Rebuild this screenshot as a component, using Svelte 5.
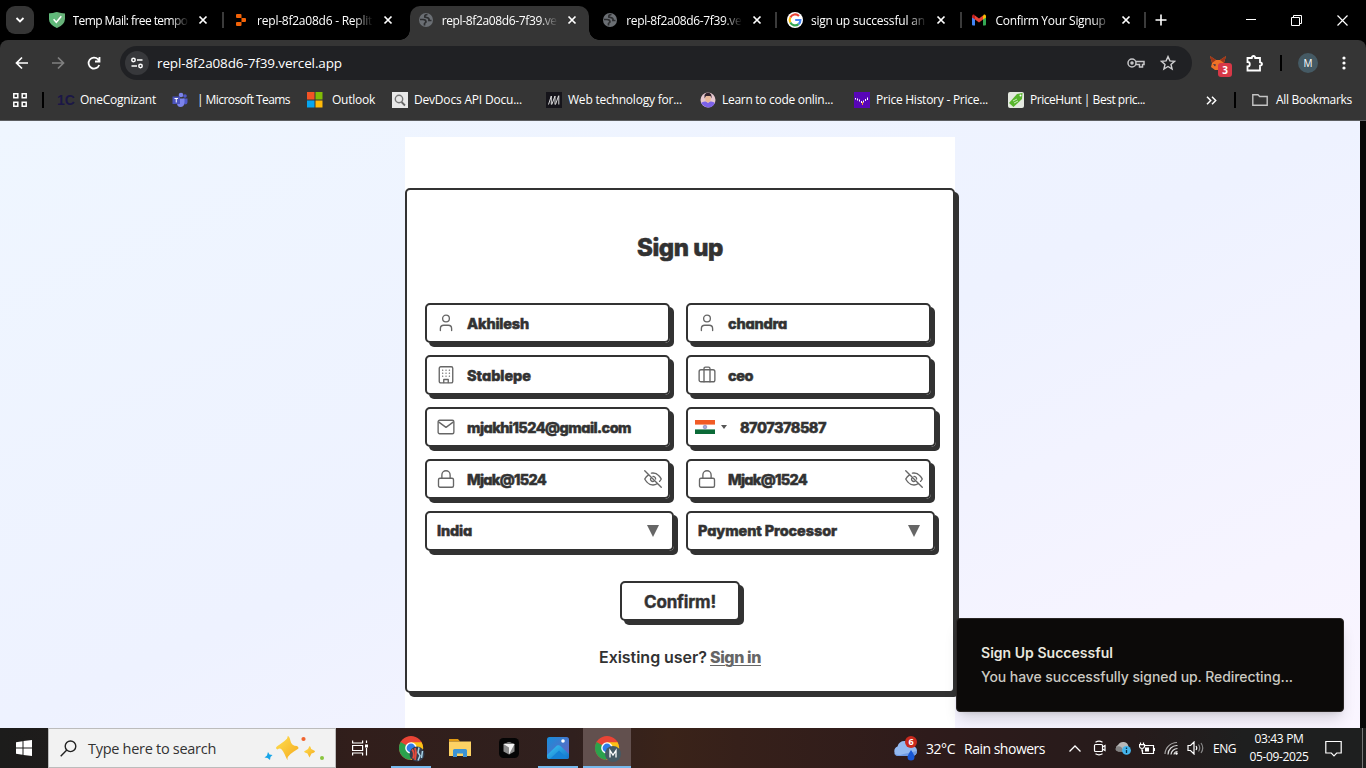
<script>
  // Tracks a label out (or in) so it occupies a given width in pixels.
  function fit(node, width) {
    node.style.letterSpacing = '0px';
    const range = document.createRange();
    range.selectNodeContents(node);
    const natural = range.getBoundingClientRect().width;
    node.style.letterSpacing = (width - natural) / node.textContent.length + 'px';
  }

  const tabs = [
    { icon: 'shield', title: 'Temp Mail: free tempo', w: 115 },
    { icon: 'replit', title: 'repl-8f2a08d6 - Replit', w: 115 },
    { icon: 'globe', title: 'repl-8f2a08d6-7f39.ve', w: 115, active: true },
    { icon: 'globe', title: 'repl-8f2a08d6-7f39.ve', w: 115, sep: true },
    { icon: 'google', title: 'sign up successful an', w: 114, sep: true },
    { icon: 'gmail', title: 'Confirm Your Signup', w: 110, sep: true }
  ];
  tabs[0].sep = true;

  const bookmarks = [
    { icon: 'onec', title: 'OneCognizant', w: 76, x: 57, slot: 23 },
    { icon: 'teams', title: '| Microsoft Teams', w: 93, x: 172, slot: 25 },
    { icon: 'outlook', title: 'Outlook', w: 43, x: 307, slot: 25 },
    { icon: 'search', title: 'DevDocs API Docu...', w: 108, x: 392, slot: 22 },
    { icon: 'mdn', title: 'Web technology for...', w: 114, x: 546, slot: 22 },
    { icon: 'face', title: 'Learn to code onlin...', w: 111, x: 700, slot: 22 },
    { icon: 'history', title: 'Price History - Price...', w: 112, x: 854, slot: 22 },
    { icon: 'tag', title: 'PriceHunt | Best pric...', w: 115, x: 1008, slot: 22 }
  ].map((b, i, all) => ({
    ...b,
    before: i ? b.x - (all[i - 1].x + all[i - 1].slot + all[i - 1].w) : 13
  }));

  const fields = [
    { icon: 'user', value: 'Akhilesh', w: 62 },
    { icon: 'user', value: 'chandra', w: 59 },
    { icon: 'building', value: 'Stablepe', w: 64 },
    { icon: 'case', value: 'ceo', w: 25 },
    { icon: 'mail', value: 'mjakhi1524@gmail.com', w: 164 },
    { kind: 'phone', value: '8707378587', w: 86 },
    { icon: 'lock', value: 'Mjak@1524', w: 79, eye: true },
    { icon: 'lock', value: 'Mjak@1524', w: 79, eye: true },
    { kind: 'select', value: 'India', w: 35 },
    { kind: 'select', value: 'Payment Processor', w: 139 }
  ];
</script>

{#snippet chromeLogo()}
  <circle cx="14" cy="14" r="12" fill="#e94435" />
  <path d="M3.600 8A12 12 0 0 0 13 26L18.500 17 14 14Z" fill="#2ba24c" />
  <path d="M13.600 26A12 12 0 0 0 24.600 8.200H14L19 17Z" fill="#fbc116" />
  <circle cx="14" cy="14" r="5.800" fill="#fff" />
  <circle cx="14" cy="14" r="4.400" fill="#2f7de9" />
{/snippet}

{#snippet fav(name)}
  <svg class="fav" width="16" height="16" viewBox="0 0 16 16" fill="none">
    {#if name === 'shield'}
      <path d="M8 0Q12 1.200 16 1.600V7Q15.600 13 8 16Q.4 13 0 7V1.600Q4 1.200 8 0Z" fill="#67b279" />
      <path d="M8 0Q4 1.200 0 1.600V7Q.4 13 8 16Z" fill="#5bc07b" opacity=".6" />
      <path d="m4.600 7.300 2.700 3 5-6" stroke="#fff" stroke-width="1.500" />
    {:else if name === 'replit'}
      <path d="M4 2h3.500q1 0 1 1v3H4q-1 0-1-1V3q0-1 1-1ZM8.500 6H12q1 0 1 1v2q0 1-1 1H8.500ZM4 10h4.500v3q0 1-1 1H4q-1 0-1-1v-2q0-1 1-1Z" fill="#f26207" />
    {:else if name === 'globe'}
      <circle cx="8" cy="8" r="7" fill="#6b6f74" />
      <path d="M9.500 2.500Q6.500 2.500 6.800 5L9.500 5.800Q11.500 6.500 11 8.500H13.500M2 7.500H5Q8 7.500 8 10L6.500 11.500V13.500" stroke="#2d2e30" stroke-width="1.700" />
    {:else if name === 'google'}
      <circle cx="8" cy="8" r="8" fill="#fff" />
      <path d="M12 4A5.400 5.400 0 0 0 3.300 5.500" stroke="#ea4335" stroke-width="2.200" />
      <path d="M3.300 5.500A5.400 5.400 0 0 0 3.300 10.500" stroke="#fbbc05" stroke-width="2.200" />
      <path d="M3.300 10.500A5.400 5.400 0 0 0 11.600 12.100" stroke="#34a853" stroke-width="2.200" />
      <path d="M11.600 12.100A5.400 5.400 0 0 0 13.400 8H8.200" stroke="#4285f4" stroke-width="2.200" />
    {:else if name === 'gmail'}
      <path d="M1 4v8.500q0 1 1 1h2V6Z" fill="#4285f4" />
      <path d="M12 6v7.500h2q1 0 1-1V4Z" fill="#34a853" />
      <path d="M4 3.500 8 6.500 12 3.500V7.500L8 10.500 4 7.500Z" fill="#ea4335" />
      <path d="M1 4.500Q1 2 3 2.500L4 3.500v4L1 5.500Z" fill="#c5221f" />
      <path d="M15 4.500Q15 2 13 2.500L12 3.500v4L15 5.500Z" fill="#fbbc04" />
    {:else if name === 'teams'}
      <circle cx="13" cy="4" r="1.800" fill="#5059c9" /><circle cx="9" cy="3" r="2.300" fill="#7b83eb" />
      <path d="M11 6.500h4.500V10q0 2.500-3 2.500Z" fill="#5059c9" />
      <path d="M5 6.500h7.500V11q-.5 4-4 4T5 11Z" fill="#7b83eb" />
      <path d="M.5 4.500H8V12H.5Z" fill="#4b53bc" /><path d="M2.500 6.500H6M4.250 6.500V10.500" stroke="#fff" />
    {:else if name === 'outlook'}
      <path d="M0 0h7.500v7.500H0Z" fill="#f35325" /><path d="M8.500 0H15.500v7.500H8.500Z" fill="#81bc06" />
      <path d="M0 8.500h7.500v7H0Z" fill="#05a6f0" /><path d="M8.500 8.500h7v7h-7Z" fill="#ffba08" />
    {:else if name === 'search'}
      <path d="M0 0h16v16H0Z" fill="#e8e8e8" /><circle cx="7" cy="7" r="3.700" stroke="#777" stroke-width="1.400" />
      <path d="m9.500 10 3.500 3.500" stroke="#666" stroke-width="1.800" />
    {:else if name === 'mdn'}
      <path d="M0 0h16v16H0Z" fill="#15141a" /><path d="M2.500 12.500 5.300 4M5.300 4V12.500M5.800 12.500 9 4M9 4V12.500M9.500 12.500 12.500 4M12.800 3.500v9" stroke="#eee" stroke-width=".9" />
    {:else if name === 'face'}
      <circle cx="8" cy="8" r="7.500" fill="#e7c8cf" /><path d="M1 11Q3 9 6 9.500L8 11 10 9.500Q13 9 15 11Q12 16 8 15.500T1 11Z" fill="#7c62e8" />
      <ellipse cx="8" cy="6.500" rx="2.800" ry="3.800" fill="#e8b99a" /><path d="M4.500 6.500V3Q6 0 9 .8T11.500 6.500L10.500 4H6Z" fill="#33232d" />
    {:else if name === 'history'}
      <path d="M0 0h16v16H0Z" fill="#5806b8" /><path d="M1.500 6v1.500M3.500 6.500V8.500M5.500 7.500V9.500M7.500 9v2M9.500 8.500v2M11.500 7V9M13.500 5.500V8" stroke="#fff" /><path d="M8.500 10v3" stroke="#f99b27" />
    {:else if name === 'tag'}
      <rect width="16" height="16" rx="2" fill="#e4e9df" /><path d="M9 2 14.500 1 14 7 5.500 15 1 11Z" fill="#57b52c" /><circle cx="12.500" cy="3.500" r="1" fill="#fff" /><path d="m5 9 4-2M6 11l4-2" stroke="#c7edba" />
    {/if}
  </svg>
{/snippet}

{#snippet fieldIcon(name)}
  <svg width="18" height="18" viewBox="0 0 24 24" fill="none" stroke="#666" stroke-width="1.800" stroke-linecap="round" stroke-linejoin="round">
    {#if name === 'user'}
      <path d="M19.500 22v-2.500a4.500 4.500 0 0 0-4.500-4.500H9a4.500 4.500 0 0 0-4.500 4.500V22" /><circle cx="12" cy="6" r="4.500" />
    {:else if name === 'building'}
      <rect x="3" y="1" width="18" height="21.500" rx="2" /><path d="M9 22v-4h6v4M7.500 5.500h.1M12 5.500h.1M16.500 5.500h.1M7.500 9.500h.1M12 9.500h.1M16.500 9.500h.1M7.500 13.500h.1M12 13.500h.1M16.500 13.500h.1" />
    {:else if name === 'case'}
      <rect x="1.500" y="5" width="21" height="16" rx="2.500" /><path d="M8 21V3.500Q8 1.500 10 1.500h4q2 0 2 2V21" />
    {:else if name === 'mail'}
      <rect x="1.500" y="3" width="21" height="18" rx="2" /><path d="m2.500 5.500 9.500 7 9.500-7" />
    {:else if name === 'lock'}
      <rect x="2" y="11" width="20" height="12" rx="2" /><path d="M6.500 11V6.500a5.500 5.500 0 0 1 11 0V11" />
    {:else}
      <path d="M1 1l22 22M9.900 4.240A9 9 0 0 1 12 4c7 0 11 8 11 8a19 19 0 0 1-2.200 3.200M6 6.500A15 15 0 0 0 1 12s4 8 11 8a11 11 0 0 0 5.500-1.700M9.900 9.900a3 3 0 1 0 4.200 4.200M12 8.500a3.500 3.500 0 0 1 3.500 3.500" />
    {/if}
  </svg>
{/snippet}

<div class="screen">
  <div class="tabstrip">
    <div class="dropdown"><svg width="10" height="6" viewBox="0 0 10 6" fill="none" stroke="#fff" stroke-width="1.800"><path d="m1.500 1 3.500 3.500L8.500 1" /></svg></div>
    {#each tabs as t}
      <div class="tab" class:active={t.active} class:sep={t.sep}>
        {@render fav(t.icon)}
        <div class="title"><span use:fit={t.w}>{t.title}</span></div>
        <svg class="close" width="10" height="10" viewBox="0 0 10 10" stroke="#fff" stroke-width="1.700"><path d="m1.500 1.500 7 7m0-7-7 7" /></svg>
      </div>
    {/each}
    <svg class="plus" width="12" height="12" viewBox="0 0 12 12" stroke="#fff" stroke-width="1.600"><path d="M6 .5v11M.5 6h11" /></svg>
    <div class="winctl">
      <svg width="10" height="10" viewBox="0 0 10 10" stroke="#fff"><path d="M0 4.500h10" /></svg>
      <svg width="11" height="11" viewBox="0 0 11 11" stroke="#fff" fill="none"><path d="M.5 2.500h8v8h-8ZM2.500 2.500v-2h8v8h-2" /></svg>
      <svg width="11" height="11" viewBox="0 0 11 11" stroke="#fff" stroke-width="1.200"><path d="m.5.5 10 10m0-10-10 10" /></svg>
    </div>
  </div>

  <div class="bars">
    <div class="toolbar">
      <svg class="nav" width="16" height="16" viewBox="0 0 16 16" fill="none" stroke="#fff" stroke-width="1.700"><path d="M14 8H3M8 2.500 2.500 8 8 13.500" /></svg>
      <svg class="nav" width="16" height="16" viewBox="0 0 16 16" fill="none" stroke="#808080" stroke-width="1.700"><path d="M2 8h11M8 2.500 13.500 8 8 13.500" /></svg>
      <svg class="nav" width="16" height="16" viewBox="0 0 16 16" fill="none" stroke="#fff" stroke-width="1.800"><path d="M13.200 10A5.500 5.500 0 1 1 12 4.200L13.500 6M13.500 2v4.500H9" /></svg>
      <div class="omnibox">
        <div class="tune"><svg width="14" height="14" viewBox="0 0 14 14" fill="none" stroke="#fff" stroke-width="1.500"><circle cx="3.500" cy="4" r="1.700" /><path d="M7 4h5.500M1.500 10H7" /><circle cx="10.500" cy="10" r="1.700" /></svg></div>
        <span class="url" use:fit={185}>repl-8f2a08d6-7f39.vercel.app</span>
        <svg width="18" height="12" viewBox="0 0 18 12" fill="none" stroke="#c6c6c8" stroke-width="1.500"><circle cx="5" cy="6" r="4" /><circle cx="5" cy="6" r="1" fill="#c6c6c8" /><path d="M9 4.500h8v3h-1.500V10H12.500V7.500H9" /></svg>
        <svg class="star" width="16" height="16" viewBox="0 0 16 16" fill="none" stroke="#d0d0d2" stroke-width="1.400"><path d="m8 1.600 1.900 4.300 4.700.4-3.600 3.100 1.100 4.600L8 11.500 3.900 14 5 9.400 1.400 6.300l4.700-.4Z" /></svg>
      </div>
      <div class="fox">
        <svg width="16" height="15" viewBox="0 0 16 15"><path d="M0 0 6 4H10L16 0 14 7 15 11 11 14H5L1 11 2 7Z" fill="#ee7127" /><path d="m0 0 6 4-4 3ZM16 0 10 4l4 3Z" fill="#9c3519" /><path d="m3 8 3 .5-1 2ZM13 8l-3 .5 1 2Z" fill="#33334a" /></svg>
        <span class="badge">3</span>
      </div>
      <svg class="puzzle" width="17" height="17" viewBox="0 0 17 17" fill="none" stroke="#fff" stroke-width="1.800"><path d="M1.500 3h4.300Q6 1 7.500 1T9.200 3H14v4.300q2 .2 2 1.700t-2 1.700v4.800H1.500v-4Q3.800 11.500 3.800 9.200T1.500 7Z" /></svg>
      <i class="vline"></i>
      <div class="avatar">M</div>
      <svg class="dots" width="4" height="14" viewBox="0 0 4 14" fill="#fff"><circle cx="2" cy="2" r="1.600" /><circle cx="2" cy="7" r="1.600" /><circle cx="2" cy="12" r="1.600" /></svg>
    </div>

    <div class="bookmarks">
      <svg class="apps" width="14" height="14" viewBox="0 0 14 14" fill="none" stroke="#fff" stroke-width="1.500"><path d="M.8.8h4v4h-4ZM9.200.8h4v4h-4ZM.8 9.200h4v4h-4ZM9.200 9.200h4v4h-4Z" /></svg>
      <i class="vline"></i>
      {#each bookmarks as b}
        <div class="bm" style="margin-left:{b.before}px;width:{b.slot + b.w}px">
          <div class="slot" style="width:{b.slot}px">
            {#if b.icon === 'onec'}<b class="onec">1C</b>{:else}{@render fav(b.icon)}{/if}
          </div>
          <span use:fit={b.w}>{b.title}</span>
        </div>
      {/each}
      <svg class="more" width="11" height="9" viewBox="0 0 11 9" fill="none" stroke="#fff" stroke-width="1.500"><path d="m1 .8 3.700 3.700L1 8.200M6 .8l3.700 3.700L6 8.200" /></svg>
      <i class="vline"></i>
      <svg class="folder" width="16" height="12" viewBox="0 0 16 12" fill="none" stroke="#c4c4c4" stroke-width="1.400"><path d="M.8.8H6l1.700 1.700h7.500v8.700H.8Z" /></svg>
      <span use:fit={76}>All Bookmarks</span>
    </div>
  </div>

  <main>
    <div class="page">
      <div class="panel">
        <section class="card">
          <h1><span use:fit={86}>Sign up</span></h1>
          <div class="form">
            {#each fields as f}
              <div class="field {f.kind ?? ''}">
                {#if f.kind === 'phone'}
                  <svg width="20" height="14" viewBox="0 0 20 14"><path d="M0 0h20v14H0Z" fill="#fff" /><path d="M0 0h20v4.600H0Z" fill="#f15b25" /><path d="M0 9.400h20V14H0Z" fill="#0b6a37" /><circle cx="10" cy="7" r="1.800" fill="#aaa9d6" stroke="#7778b9" stroke-width=".6" /></svg>
                  <svg class="caret" width="6" height="4" viewBox="0 0 6 4"><path d="M0 0h6L3 4Z" fill="#555" /></svg>
                {:else if f.icon}
                  {@render fieldIcon(f.icon)}
                {/if}
                <span class="value" use:fit={f.w}>{f.value}</span>
                {#if f.eye}<div class="end">{@render fieldIcon('eye')}</div>{/if}
                {#if f.kind === 'select'}<svg class="end" width="12" height="12" viewBox="0 0 12 12"><path d="M0 0h12L6 12Z" fill="#666" /></svg>{/if}
              </div>
            {/each}
          </div>
          <button><span use:fit={72}>Confirm!</span></button>
          <p><span use:fit={108}>Existing user?</span><a href="#signin" use:fit={51}>Sign in</a></p>
        </section>
      </div>
      <div class="toast">
        <strong use:fit={132}>Sign Up Successful</strong>
        <span use:fit={312}>You have successfully signed up. Redirecting...</span>
      </div>
    </div>
    <div class="scroll"></div>
  </main>

  <footer>
    <div class="start"><svg width="16" height="16" viewBox="0 0 16 16" fill="#fff"><path d="M0 2.200 6.500 1.300V7.500H0ZM7.500 1.100 16 0v7.500H7.500ZM0 8.500h6.500v6.200L0 13.800ZM7.500 8.500H16V16L7.500 14.900Z" /></svg></div>
    <div class="search">
      <svg width="17" height="17" viewBox="0 0 17 17" fill="none" stroke="#222" stroke-width="1.400"><circle cx="10.500" cy="6.300" r="5.300" /><path d="M6.800 10 .7 16.200" /></svg>
      <span use:fit={128}>Type here to search</span>
      <svg class="sparkle" width="61" height="25" viewBox="0 0 61 25">
        <defs><linearGradient id="gold" x2="1" y2="1"><stop stop-color="#ffe052" /><stop offset="1" stop-color="#f4a91d" /></linearGradient></defs>
        <path d="M23.500 0Q25.500 0 26.500 5T33 10Q36 12 33 13.500T26.500 18 23.500 23.500 20.500 18 13.500 13.500Q10.500 12 13.500 10T20.500 5 23.500 0Z" fill="url(#gold)" />
        <path d="M45.500 10Q46.500 10 47.200 13L51 15Q51 16.500 47.500 17.500L45.500 21.500 43.500 17.500Q40 16.500 40 15.500L44 13Z" fill="url(#gold)" />
        <path d="M4 16 5.500 18.500 8.500 19 6.500 21 6 24 3.500 22 .5 21.500 3 19.500Z" fill="#18a5e8" /><circle cx="39.500" cy="3" r="2.100" fill="#f0642f" /><circle cx="58" cy="22" r="2" fill="#8ac53f" />
      </svg>
    </div>
    <div class="taskview"><svg width="16" height="16" viewBox="0 0 16 16" fill="none" stroke="#fff" stroke-width="1.200"><path d="M.6.5V3h10V.5M.6 5.500h10v5H.6ZM.6 15.500V13h10v2.500M14.500.5V3M14.500 8v7.500" /><path d="M13 4.500h3v3h-3Z" fill="#fff" stroke="none" /></svg></div>
    <div class="app open">
      <svg width="28" height="28" viewBox="0 0 28 28">{@render chromeLogo()}<circle cx="20" cy="20" r="7.500" fill="#333e50" /><path d="M15 15.500q3 3 1 9M18 14l1 5-1 7" stroke="#e64b3c" stroke-width="1.800" fill="none" /><path d="m22 13.500-1 5 2 3-2 5M25.500 17l-1 7" stroke="#a9d4e8" stroke-width="1.500" fill="none" /></svg>
    </div>
    <div class="app">
      <svg width="24" height="22" viewBox="0 0 24 22"><path d="M1 2h9l2 2.500H1Z" fill="#e19b13" /><path d="M1 4.500h22V19H1Z" fill="#fdd264" /><path d="M5 20v-6.500q0-1.500 1.500-1.500h11q1.500 0 1.500 1.500V20h-4v-3.500H9V20Z" fill="#3d93d4" /></svg>
    </div>
    <div class="app">
      <svg width="20" height="20" viewBox="0 0 20 20"><rect width="20" height="20" rx="4.500" fill="#050505" /><path d="m10 4 5.500 2v7.500L10 16.500l-5.500-3V6Z" fill="#8b8b8b" /><path d="M4.500 6h11L10 16.500V9.500Z" fill="#f4f4f4" /><path d="m10 4 5.500 2h-11Z" fill="#777" /></svg>
    </div>
    <div class="app open">
      <svg width="22" height="22" viewBox="0 0 22 22"><defs><linearGradient id="sky" x2="1" y2="1"><stop stop-color="#168edb" /><stop offset="1" stop-color="#7060bd" /></linearGradient><linearGradient id="hill" x2="1" y2="1"><stop stop-color="#39c8f5" /><stop offset="1" stop-color="#1570c8" /></linearGradient></defs><rect width="22" height="22" rx="2.500" fill="url(#sky)" /><path d="M0 18 10 8.500Q12 7.500 14 9.500L22 17v3q0 2-2 2H2q-2 0-2-2Z" fill="url(#hill)" /><path d="m3 22 9-8.500 9 8.200Z" fill="#1682d6" /><circle cx="16" cy="4" r="1.800" fill="#fff" /></svg>
    </div>
    <div class="app open current">
      <svg width="28" height="28" viewBox="0 0 28 28">{@render chromeLogo()}<circle cx="20" cy="20" r="8" fill="#455a64" /><path d="M17 23.500v-7l3 4.500 3-4.500v7" stroke="#fff" stroke-width="1.300" fill="none" /></svg>
    </div>
    <div class="tray">
      <svg width="25" height="25" viewBox="0 0 25 25"><path d="M5 20a5 5 0 0 1-.5-9.500Q6 5 11.500 5T19 10q5 .5 5 5t-5 5Z" fill="#93b9f0" /><path d="M1 17q3 3 8 1.500T24 15q0 5-5 5H5q-3 0-4-3Z" fill="#709be3" /><path d="M18 14q-3.500 5.500-3.500 7a3.500 3.500 0 0 0 7 0q0-2-3.500-7Z" fill="#1757d6" /><circle cx="18" cy="6" r="6" fill="#ca2a1e" /><text x="18" y="9.300" text-anchor="middle" font-size="9" font-weight="700" fill="#fff">6</text></svg>
      <span class="temp" use:fit={29}>32°C</span>
      <span class="rain" use:fit={81}>Rain showers</span>
      <div class="icons">
        <svg width="12" height="7" viewBox="0 0 12 7" fill="none" stroke="#fff" stroke-width="1.300"><path d="m.5 6.500 5.500-5.500 5.500 5.500" /></svg>
        <svg width="13" height="16" viewBox="0 0 13 16" fill="none" stroke="#fff" stroke-width="1.200"><rect x="1.500" y="4.500" width="8" height="7" rx="1" /><path d="m9.500 7 2.500-1.500v5L9.500 9M2.500 2.200Q6 .2 9.500 2.200M2.500 13.800Q6 15.800 9.500 13.800" /></svg>
        <svg width="16" height="14" viewBox="0 0 16 14"><path d="M3.500 10.500a3.500 3.500 0 0 1-.5-6.500Q5 .5 9 1t4.500 5l-3 4.500Z" fill="#b8b8b8" /><path d="M2 5.500q5-1 6.500 5H3Q0 9.500.5 7.500Z" fill="#838383" /><circle cx="11.500" cy="9.400" r="4.400" fill="#45b5ec" /><path d="M11.500 6.600v1.300M11.500 8.900v3.200" stroke="#063049" stroke-width="1.300" /></svg>
        <svg width="16" height="13" viewBox="0 0 16 13" fill="none" stroke="#fff" stroke-width="1.200"><path d="M6 3.500h8.500v8H3.500V8M1.500.5v2M4.500.5v2M.5 2.700h5v2Q5 6.500 3 6.500T.5 4.700ZM3 6.500v3M15.500 6v3" /><path d="M6 5.500h4v4H6Z" fill="#fff" stroke="none" /></svg>
        <svg width="14" height="14" viewBox="0 0 14 14" fill="none" stroke="#ddd" stroke-width="1.200"><path d="M1 13A12 12 0 0 1 13 1.500" opacity=".7" /><path d="M4 13.500A9 9 0 0 1 13.500 4.500M7 13.500A6.500 6.500 0 0 1 13.500 7.500M10 13.500a3.500 3.500 0 0 1 3.500-3" /><circle cx="12.500" cy="12.500" r="1.200" fill="#fff" stroke="none" /></svg>
        <svg width="17" height="14" viewBox="0 0 17 14" fill="none" stroke="#fff" stroke-width="1.200"><path d="M1 4.500h2.500L7 1v12L3.500 9.500H1ZM9 5q1.500 2 0 4" /><path d="M11.500 3.500q2.500 3.500 0 7M14 2q3.500 5 0 10" stroke="#888" /></svg>
      </div>
      <span class="lang" use:fit={23}>ENG</span>
      <div class="clock"><span use:fit={49}>03:43 PM</span><span use:fit={59}>05-09-2025</span></div>
      <svg class="note" width="17" height="17" viewBox="0 0 17 17" fill="none" stroke="#fff" stroke-width="1.200"><path d="M.8 1.500h15.400v11.500h-4.500L9 15.800 6.300 13H.8Z" /></svg>
      <i class="peek"></i>
    </div>
  </footer>
</div>

<style>
  :global(body) { margin: 0; background: #000; overflow: hidden; }
  .screen { width: 1366px; height: 768px; display: flex; flex-direction: column; overflow: hidden; background: #000; font-family: "Open Sans", "Noto Sans", sans-serif; font-size: 12px; color: #fff; white-space: nowrap; }
  .screen *, .screen { box-sizing: border-box; }
  svg { display: block; flex: none; }
  .tabstrip { height: 40px; display: flex; align-items: center; flex: none; padding-left: 6px; }
  .dropdown { width: 28px; height: 28px; border-radius: 9px; background: #353535; display: grid; place-items: center; margin-right: 6.500px; }
  .tab { width: 184.600px; height: 34px; margin-top: 6px; padding: 0 0 6px 8px; display: flex; align-items: center; position: relative; flex: none; }
  .title { width: 116px; margin-left: 8px; padding-top: 1px; line-height: 20px; mask-image: linear-gradient(90deg, #000 84%, transparent); }
  .close { margin-left: 9.500px; }
  .tab.sep::after { content: ""; position: absolute; left: 181px; top: 6px; width: 2px; height: 16px; background: #3b3b3b; }
  .tab.active { width: 179px; margin-right: 5.600px; background: #353535; border-radius: 10px 10px 0 0; }
  .tab.active::before, .tab.active::after { content: ""; position: absolute; bottom: 0; width: 10px; height: 10px; }
  .tab.active::before { left: -10px; background: radial-gradient(circle at 0 0, transparent 9.500px, #353535 10px); }
  .tab.active::after { right: -10px; background: radial-gradient(circle at 100% 0, transparent 9.500px, #353535 10px); }
  .plus { margin-left: 6.500px; }
  .winctl { margin-left: auto; margin-right: 18px; display: flex; align-items: center; gap: 35px; }
  .bars { height: 81px; flex: none; background: #353535; border-radius: 8px 8px 0 0; border-bottom: 1px solid #5c5e61; }
  .toolbar { height: 46px; display: flex; align-items: center; padding-left: 14px; }
  .nav { margin-right: 20px; }
  .omnibox { width: 1072px; height: 34px; margin-left: -2px; border-radius: 17px; background: #202124; display: flex; align-items: center; padding: 0 16px 0 5px; flex: none; }
  .tune { width: 24px; height: 24px; border-radius: 50%; background: #37383b; display: grid; place-items: center; margin-right: 8px; }
  .url { font-size: 13.500px; margin-right: auto; }
  .star { margin-left: 15px; }
  .fox { width: 16px; height: 15px; margin-left: 18px; position: relative; }
  .badge { position: absolute; left: 8px; top: 7px; width: 14px; height: 14px; border-radius: 3px; background: #d73847; font-size: 10px; font-weight: 700; line-height: 14px; text-align: center; }
  .puzzle { margin-left: 20px; }
  .vline { width: 2px; height: 16px; background: #000; flex: none; }
  .toolbar .vline { margin-left: 17px; }
  .avatar { width: 20px; height: 20px; border-radius: 50%; margin-left: 16px; background: #455a64; font-size: 10px; line-height: 20px; text-align: center; }
  .dots { margin-left: 24px; }
  .bookmarks { height: 28px; display: flex; align-items: center; padding-left: 13px; }
  .bookmarks .apps { margin-right: 15px; }
  .bookmarks span { font-size: 12px; line-height: 18px; }
  .bm { display: flex; align-items: center; flex: none; }
  .slot { flex: none; }
  .onec { color: #1b1746; font-size: 14px; font-weight: 600; font-family: "Liberation Sans", sans-serif; }
  .more { margin: 0 17px 0 61px; }
  .folder { margin: 0 8px 0 16px; }

  main { height: 607px; flex: none; display: flex; background: #000; }
  .page { width: 1360px; padding-top: 16px; position: relative; overflow: hidden; background: linear-gradient(to bottom right, #eff6ff, #eef2ff 50%, #faf5ff); }
  .scroll { width: 6px; background: #080808; }
  .panel { width: 550px; height: 591px; margin: 0 auto; padding-top: 51px; background: #fff; }
  .card { height: 505px; padding: 0 18px; border: 2px solid #323232; border-radius: 5px; box-shadow: 4px 4px #323232; background: #fff; color: #323232; font-family: "Inter", sans-serif; font-feature-settings: "cv11", "ss03"; display: flex; flex-direction: column; align-items: center; }
  h1 { margin: 41px 0 38px; height: 34px; line-height: 34px; font-size: 24px; font-weight: 800; -webkit-text-stroke: .6px #323232; }
  .form { width: 100%; display: grid; grid-template-columns: 249px 250px; column-gap: 12px; row-gap: 12px; }
  .field { width: 245px; height: 40px; border: 2px solid #323232; border-radius: 5px; box-shadow: 4px 4px #323232; display: flex; align-items: center; padding: 0 6px 0 10px; font-size: 14.500px; font-weight: 800; -webkit-text-stroke: .5px #323232; }
  .field .value { margin-left: 12px; padding-top: 2px; line-height: 20px; }
  .end { margin-left: auto; }
  .field.phone { width: 250px; padding-left: 7px; }
  .phone .caret { margin-left: 6px; }
  .phone .value { margin-left: 13px; }
  .field.select { width: 249px; padding-right: 13px; }
  .select .value { margin-left: 0; padding: 0; }
  button { width: 120px; height: 40px; margin: 30px 0 0; padding: 2px 0 0; flex: none; border: 2px solid #323232; border-radius: 5px; background: #fff; box-shadow: 4px 4px #323232; color: #323232; font: 700 17px "Inter", sans-serif; font-feature-settings: "cv11"; -webkit-text-stroke: .4px #323232; }
  p { margin: 24px 0 0; display: flex; gap: 3px; font-size: 16px; line-height: 24px; font-weight: 600; }
  p a { color: #666; font-weight: 800; text-underline-offset: 2px; text-decoration-thickness: 1px; }
  .toast { position: absolute; left: 956px; top: 497px; width: 388px; height: 94px; padding: 22px 24px; border: 1px solid #292524; border-radius: 4px; background: #0c0a09; box-shadow: 0 10px 15px -3px #0002, 0 4px 6px -4px #0002; display: flex; flex-direction: column; align-items: flex-start; font: 500 14px/24px "Inter", sans-serif; color: #cbc9c2; }
  .toast strong { font-weight: 600; color: #e9e7df; }

  footer { height: 40px; flex: none; display: flex; background: linear-gradient(90deg, #1c1c1b 0, #241b1a 15%, #311e1b 26%, #30201e 42%, #3a2319 49%, #36201a 54%, #2e1b1b 68%, #261b1b 83%, #1e1f1f 91%); }
  .start { width: 48px; display: grid; place-items: center; }
  .search { width: 288px; background: #f2f2f2; border: 1px solid #bcbcbc; display: flex; align-items: center; padding-left: 11px; color: #333; font-size: 14.500px; }
  .search span { margin-left: 11px; }
  .sparkle { margin-left: 48px; }
  .taskview { width: 48px; margin-right: 3px; display: grid; place-items: center; }
  .app { width: 48px; margin-right: 1px; display: grid; place-items: center; position: relative; flex: none; }
  .app.open::after { content: ""; position: absolute; bottom: 0; left: 4px; right: 4px; height: 2px; background: #76b9ed; }
  .app.current { background: #62504e; }
  .app.current::after { left: 0; right: 0; }
  .tray { margin-left: 261px; display: flex; align-items: center; font-size: 14px; }
  .temp { margin-left: 8px; width: 29px; }
  .rain { margin-left: 9px; width: 81px; }
  .icons { margin-left: 18px; display: grid; grid-template-columns: repeat(6, 24px); justify-items: center; align-items: center; }
  .lang { margin-left: 6px; width: 23px; font-size: 12px; }
  .clock { width: 60px; margin-left: 13px; display: flex; flex-direction: column; align-items: center; font-size: 12px; line-height: 18px; }
  .note { margin-left: 16px; }
  .peek { width: 1px; height: 40px; margin-left: 20px; background: #777; }
</style>
